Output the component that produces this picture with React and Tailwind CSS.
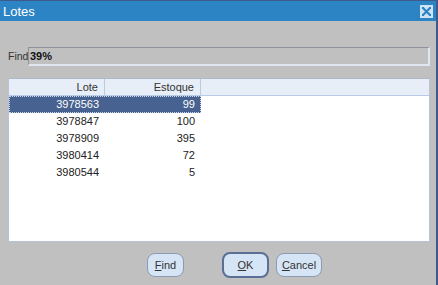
export default function App() {
  const rows = [
    ["3978563", "99"],
    ["3978847", "100"],
    ["3978909", "395"],
    ["3980414", "72"],
    ["3980544", "5"],
  ];
  const font = { fontFamily: '"Liberation Sans", Arial, sans-serif' };
  return (
    <div
      className="w-[438px] h-[285px] flex flex-col bg-[#c0c0c0] border-r-2 border-r-[#3d5a8a] overflow-hidden text-[11px] text-[#222]"
      style={font}
    >
      {/* Title bar */}
      <div className="h-[21px] shrink-0 bg-[#2c84c4] border-t border-t-[#3d5a8a] flex items-center justify-between pl-[3px] pr-[3px]">
        <span className="text-white text-[13px] leading-none">Lotes</span>
        <div className="w-[13px] h-[13px] bg-[#cfe3f4] flex items-center justify-center mt-[1px]">
          <svg width="11" height="11" viewBox="0 0 11 11">
            <path d="M2 2 L9 9 M9 2 L2 9" stroke="#2c84c4" strokeWidth="2.2" />
            <rect x="1" y="1" width="2" height="2" fill="#2c84c4" />
            <rect x="8" y="1" width="2" height="2" fill="#2c84c4" />
            <rect x="1" y="8" width="2" height="2" fill="#2c84c4" />
            <rect x="8" y="8" width="2" height="2" fill="#2c84c4" />
          </svg>
        </div>
      </div>

      {/* Body */}
      <div className="flex flex-col pl-[8px] pr-[6px] pt-[26px]">
        <div className="flex items-center h-[19px]">
          <span className="w-[20px] text-[#333] text-[10.5px]">Find</span>
          <div className="w-[402px] h-[19px] border-t border-l border-t-[#8e939b] border-l-[#8e939b] border-b-2 border-r-2 border-b-[#dfe6f0] border-r-[#dfe6f0] flex items-center pl-[1px]">
            <span className="font-bold text-[#111]">39%</span>
          </div>
        </div>

        {/* Table */}
        <div className="mt-[12px] w-[422px] h-[164px] bg-white border border-[#b5c4dc] border-t-[#aeb8c8] flex flex-col">
          <div className="h-[17px] bg-[#e8eef7] border-b border-b-[#b8cbe6] flex">
            <div className="w-[96px] border-r border-r-[#b8cbe6] text-right pr-[6px] leading-[16px] text-[#333]">Lote</div>
            <div className="w-[96px] border-r border-r-[#b8cbe6] text-right pr-[6px] leading-[16px] text-[#333]">Estoque</div>
            <div className="flex-1" />
          </div>
          {rows.map((r, i) => (
            <div key={i} className="h-[17px] flex">
              <div
                className={
                  "w-[192px] flex " +
                  (i === 0
                    ? "bg-[#476290] text-white outline-1 outline-dotted outline-[#c8d4e8] -outline-offset-1"
                    : "text-[#222]")
                }
              >
                <div className="w-[96px] text-right pr-[6px] leading-[17px]">{r[0]}</div>
                <div className="w-[96px] text-right pr-[6px] leading-[17px]">{r[1]}</div>
              </div>
            </div>
          ))}
        </div>

        {/* Buttons */}
        <div className="flex items-center mt-[10px] pl-[139px]">
          <div className="w-[37px] h-[24px] rounded-[8px] bg-[#d6e5f5] border border-[#8d9bb2] flex items-center justify-center text-[#333]">
            <span><span className="underline">F</span>ind</span>
          </div>
          <div className="ml-[38px] w-[47px] h-[26px] rounded-[8px] bg-[#d6e5f5] border-2 border-[#5b6f94] flex items-center justify-center text-[#333]">
            <span><span className="underline">O</span>K</span>
          </div>
          <div className="ml-[7px] w-[46px] h-[24px] rounded-[8px] bg-[#d6e5f5] border border-[#8d9bb2] flex items-center justify-center text-[#333]">
            <span><span className="underline">C</span>ancel</span>
          </div>
        </div>
      </div>
    </div>
  );
}
